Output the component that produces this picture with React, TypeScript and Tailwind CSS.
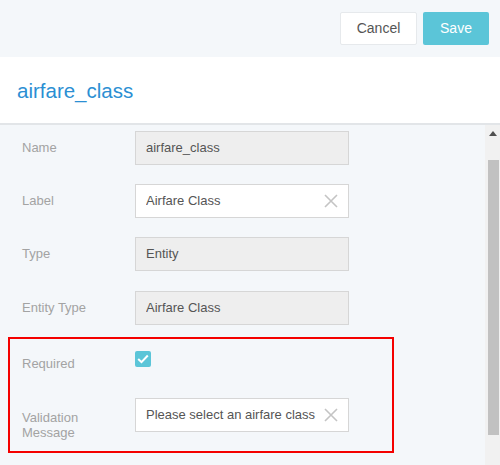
import React from 'react';

const ClearIcon = () => (
  <svg width="14" height="14" viewBox="0 0 14 14" className="shrink-0">
    <path d="M1 1 L13 13 M13 1 L1 13" stroke="#c4c4c4" strokeWidth="1.6" fill="none" />
  </svg>
);

const Field = ({ value, disabled, clearable }: { value: string; disabled?: boolean; clearable?: boolean }) => (
  <div
    className={`flex items-center w-[214px] h-[34px] border border-[#d6d6d6] pl-[10px] pr-[10px] text-[13px] text-[#555] ${disabled ? 'bg-[#eeeeee]' : 'bg-white'}`}
  >
    <span className="flex-1 truncate">{value}</span>
    {clearable && <ClearIcon />}
  </div>
);

const Row = ({ label, children, className = '' }: { label: string; children: React.ReactNode; className?: string }) => (
  <div className={`flex items-center ${className}`}>
    <span className="w-[113px] text-[13px] text-[#a3a3a3]">{label}</span>
    {children}
  </div>
);

export default function App() {
  return (
    <div className="w-[500px] h-[465px] bg-[#f4f7fa] flex flex-col overflow-hidden font-['Liberation_Sans',Arial,sans-serif]">
      {/* header actions */}
      <div className="h-[57px] flex justify-end items-start pt-[12px] pr-[11px] gap-[6px] shrink-0">
        <button className="w-[77px] h-[33px] bg-white border border-[#e6e9ec] rounded-[2px] text-[14px] text-[#555]">
          Cancel
        </button>
        <button className="w-[66px] h-[33px] bg-[#5bc5d8] rounded-[2px] text-[14px] text-white">
          Save
        </button>
      </div>

      {/* title */}
      <div className="h-[68px] bg-white border-b-2 border-[#e2e5e8] flex items-center pl-[17px] shrink-0">
        <h1 className="text-[20.5px] text-[#2b8fd3] leading-none pt-[2px]">airfare_class</h1>
      </div>

      <div className="flex-1 flex min-h-0">
        <div className="flex-1 pt-[6px]">
          <div className="pl-[22px]">
            <Row label="Name">
              <Field value="airfare_class" disabled />
            </Row>
            <Row label="Label" className="mt-[19px]">
              <Field value="Airfare Class" clearable />
            </Row>
            <Row label="Type" className="mt-[19px]">
              <Field value="Entity" disabled />
            </Row>
            <Row label="Entity Type" className="mt-[20px]">
              <Field value="Airfare Class" disabled />
            </Row>
          </div>

          {/* highlighted block */}
          <div className="ml-[8px] mt-[12px] w-[386px] border-2 border-[#f40000] pl-[12px] pt-[7px] pb-[19px]">
            <div className="flex h-[34px]">
              <span className="w-[113px] text-[13px] text-[#a3a3a3] self-center pt-[1px]">Required</span>
              <div className="mt-[5px] w-[16px] h-[16px] rounded-[2px] bg-[#5bc5d8] flex items-center justify-center">
                <svg width="12" height="10" viewBox="0 0 12 10">
                  <path d="M1.2 5 L4.5 8.2 L10.8 1.5" stroke="white" strokeWidth="2" fill="none" />
                </svg>
              </div>
            </div>
            <div className="flex h-[34px] mt-[18px]">
              <span className="w-[113px] text-[13px] leading-[15px] text-[#a3a3a3] pt-[12px]">
                Validation
                <br />
                Message
              </span>
              <Field value="Please select an airfare class" clearable />
            </div>
          </div>
        </div>

        {/* scrollbar */}
        <div className="w-[15px] bg-[#f1f1f1] flex flex-col items-center">
          <svg width="8" height="5" viewBox="0 0 8 5" className="mt-[6px]">
            <path d="M0 5 L4 0 L8 5 Z" fill="#505050" />
          </svg>
          <div className="mt-[24px] w-[11px] h-[275px] bg-[#c1c1c1] ml-[1px]" />
        </div>
      </div>
    </div>
  );
}
